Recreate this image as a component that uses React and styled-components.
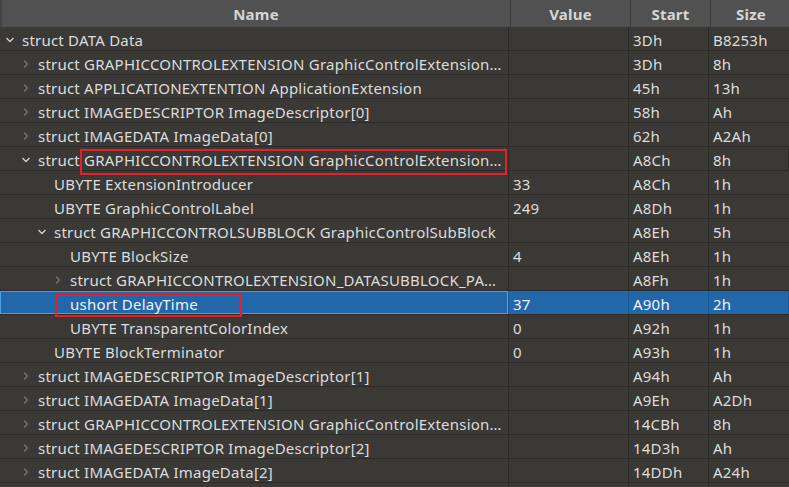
import React from 'react';
import styled, {createGlobalStyle} from 'styled-components';

const GlobalStyle = createGlobalStyle`
  html, body {
    margin: 0;
    padding: 0;
    background: #3a3936;
    overflow: hidden;
  }
  body {
    font-family: "Noto Sans", "Open Sans", sans-serif;
  }
`;

const Table = styled.div`
  width: 789px;
  height: 487px;
  background: #3a3936;
  color: #dcdcdc;
  font-size: 15px;
  letter-spacing: 0.22px;
  overflow: hidden;
`;

const HeaderRow = styled.div`
  display: grid;
  grid-template-columns: 509px 120px 80px 80px;
  height: 27px;
  background: #515151;
  border-left: 2px solid #444;
  box-sizing: border-box;
`;

const HeaderCell = styled.div`
  display: flex;
  align-items: center;
  justify-content: center;
  font-weight: bold;
  color: #d6d6d6;
  border-right: 1px solid #3e3e3e;
  &:last-child {
    border-right: none;
  }
`;

const Row = styled.div`
  position: relative;
  display: grid;
  grid-template-columns: 509px 120px 80px 80px;
  height: 23px;
  border-bottom: 1px solid #2c2b29;
  background: ${p => (p.selected ? '#2367ab' : 'transparent')};
  color: ${p => (p.selected ? '#f2f2f2' : '#dcdcdc')};
`;

const Cell = styled.div`
  display: flex;
  align-items: center;
  padding-left: 4px;
  padding-top: 2px;
  white-space: nowrap;
  overflow: hidden;
  border-right: 1px solid ${p => (p.selected ? '#1d5896' : '#2c2b29')};
  &:last-child {
    border-right: none;
  }
`;

const NameCell = styled(Cell)`
  padding-left: ${p => 6 + p.level * 16}px;
  padding-right: 4px;
  box-shadow: ${p => (p.selected ? 'inset 0 0 0 1px #4d9fe8' : 'none')};
`;

const Toggle = styled.span`
  width: 16px;
  flex: 0 0 16px;
  display: flex;
  align-items: center;
`;

const Label = styled.span`
  overflow: hidden;
  text-overflow: ellipsis;
  white-space: nowrap;
`;

const Mark = styled.div`
  position: absolute;
  box-sizing: border-box;
  left: ${p => p.left}px;
  top: ${p => p.top}px;
  width: ${p => p.width}px;
  height: ${p => p.height}px;
  border: 2px solid #e81f28;
  pointer-events: none;
  z-index: 2;
`;

const Chevron = ({open}) => (
  <svg width="8" height="8" viewBox="0 0 8 8">
    {open
      ? <path d="M0.5 2 L4 5.5 L7.5 2" fill="none" stroke="#cfcfcf" strokeWidth="1.4"/>
      : <path d="M2 0.5 L5.5 4 L2 7.5" fill="none" stroke="#777" strokeWidth="1.2"/>}
  </svg>
);

const rows = [
  {level: 0, toggle: 'open', name: 'struct DATA Data', start: '3Dh', size: 'B8253h'},
  {level: 1, toggle: 'closed', name: 'struct GRAPHICCONTROLEXTENSION GraphicControlExtension[0]', start: '3Dh', size: '8h'},
  {level: 1, toggle: 'closed', name: 'struct APPLICATIONEXTENTION ApplicationExtension', start: '45h', size: '13h'},
  {level: 1, toggle: 'closed', name: 'struct IMAGEDESCRIPTOR ImageDescriptor[0]', start: '58h', size: 'Ah'},
  {level: 1, toggle: 'closed', name: 'struct IMAGEDATA ImageData[0]', start: '62h', size: 'A2Ah'},
  {level: 1, toggle: 'open', name: 'struct GRAPHICCONTROLEXTENSION GraphicControlExtension[1]', start: 'A8Ch', size: '8h', mark: {left: 80, top: 2, width: 427, height: 26}},
  {level: 2, name: 'UBYTE ExtensionIntroducer', value: '33', start: 'A8Ch', size: '1h'},
  {level: 2, name: 'UBYTE GraphicControlLabel', value: '249', start: 'A8Dh', size: '1h'},
  {level: 2, toggle: 'open', name: 'struct GRAPHICCONTROLSUBBLOCK GraphicControlSubBlock', start: 'A8Eh', size: '5h'},
  {level: 3, name: 'UBYTE BlockSize', value: '4', start: 'A8Eh', size: '1h'},
  {level: 3, toggle: 'closed', name: 'struct GRAPHICCONTROLEXTENSION_DATASUBBLOCK_PACKEDFIELDS PackedFields', start: 'A8Fh', size: '1h'},
  {level: 3, name: 'ushort DelayTime', value: '37', start: 'A90h', size: '2h', selected: true, mark: {left: 55, top: 3, width: 187, height: 23}},
  {level: 3, name: 'UBYTE TransparentColorIndex', value: '0', start: 'A92h', size: '1h'},
  {level: 2, name: 'UBYTE BlockTerminator', value: '0', start: 'A93h', size: '1h'},
  {level: 1, toggle: 'closed', name: 'struct IMAGEDESCRIPTOR ImageDescriptor[1]', start: 'A94h', size: 'Ah'},
  {level: 1, toggle: 'closed', name: 'struct IMAGEDATA ImageData[1]', start: 'A9Eh', size: 'A2Dh'},
  {level: 1, toggle: 'closed', name: 'struct GRAPHICCONTROLEXTENSION GraphicControlExtension[2]', start: '14CBh', size: '8h'},
  {level: 1, toggle: 'closed', name: 'struct IMAGEDESCRIPTOR ImageDescriptor[2]', start: '14D3h', size: 'Ah'},
  {level: 1, toggle: 'closed', name: 'struct IMAGEDATA ImageData[2]', start: '14DDh', size: 'A24h'},
  {level: 1, toggle: 'closed', name: 'struct GRAPHICCONTROLEXTENSION GraphicControlExtension[3]', start: '14E5h', size: '8h'},
];

const App = () => (
  <>
    <GlobalStyle/>
    <Table>
      <HeaderRow>
        <HeaderCell>Name</HeaderCell>
        <HeaderCell>Value</HeaderCell>
        <HeaderCell>Start</HeaderCell>
        <HeaderCell>Size</HeaderCell>
      </HeaderRow>
      {rows.map((r, i) => (
        <Row key={i} selected={r.selected}>
          <NameCell level={r.level} selected={r.selected}>
            <Toggle>{r.toggle && <Chevron open={r.toggle === 'open'}/>}</Toggle>
            <Label>{r.name}</Label>
          </NameCell>
          <Cell selected={r.selected}>{r.value}</Cell>
          <Cell selected={r.selected}>{r.start}</Cell>
          <Cell selected={r.selected}>{r.size}</Cell>
          {r.mark && <Mark {...r.mark}/>}
        </Row>
      ))}
    </Table>
  </>
);

export default App;
